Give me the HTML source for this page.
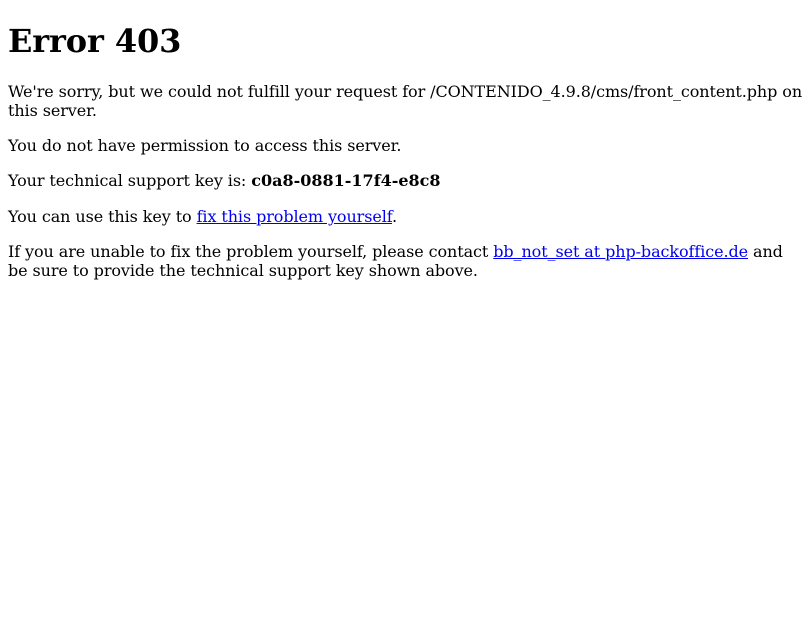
<!DOCTYPE html>
<html><head><meta charset="utf-8"><style>
body{margin:8px;font-family:"DejaVu Serif",serif;font-size:16px;color:#000;background:#fff;letter-spacing:-0.09px}
h1{font-size:2em;margin:22.4px 0 21.4px;letter-spacing:-0.1px}
p{margin:16.3px 0;line-height:19px}
strong{letter-spacing:0}
a{color:#0000ee}
</style></head><body>
<h1>Error 403</h1>
<p>We're sorry, but we could not fulfill your request for /CONTENIDO_4.9.8/cms/front_content.php on this server.</p>
<p>You do not have permission to access this server.</p>
<p>Your technical support key is: <strong>c0a8-0881-17f4-e8c8</strong></p>
<p>You can use this key to <a href="#">fix this problem yourself</a>.</p>
<p>If you are unable to fix the problem yourself, please contact <a href="#">bb_not_set at php-backoffice.de</a> and be sure to provide the technical support key shown above.</p>
</body></html>
